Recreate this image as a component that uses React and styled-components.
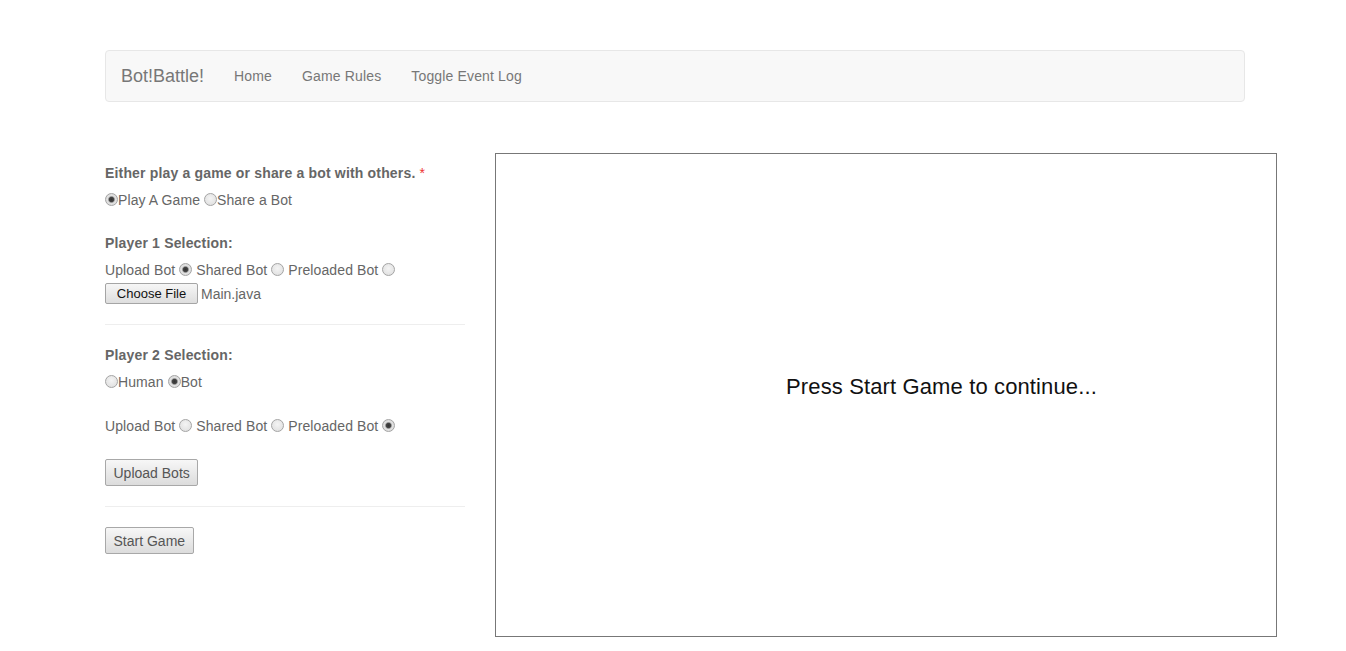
import React from "react";
import styled, { createGlobalStyle } from "styled-components";

const Global = createGlobalStyle`
  html, body { margin: 0; padding: 0; background: #fff; }
  body { font-family: "Liberation Sans", Arial, sans-serif; font-size: 14px; color: #666; }
`;

const Page = styled.div`
  width: 1140px;
  margin: 50px 0 0 105px;
`;

const Navbar = styled.nav`
  box-sizing: border-box;
  height: 52px;
  background: #f8f8f8;
  border: 1px solid #e7e7e7;
  border-radius: 4px;
  display: flex;
  align-items: center;
  padding: 0 15px;
`;

const Brand = styled.a`
  font-size: 18px;
  color: #777;
  line-height: 20px;
  padding-right: 15px;
  text-decoration: none;
`;

const NavLink = styled.a`
  font-size: 14px;
  color: #777;
  line-height: 20px;
  padding: 0 15px;
  text-decoration: none;
  letter-spacing: 0.15px;
`;

const Main = styled.div`
  display: flex;
  gap: 30px;
  margin-top: 51px;
`;

const Side = styled.div`
  width: 360px;
  flex: none;
  padding-top: 10px;
`;

const Label = styled.div`
  font-size: 14px;
  font-weight: bold;
  line-height: 20px;
  color: #666;
  letter-spacing: 0.17px;
  margin-top: ${(p) => p.$mt || 0}px;
`;

const Req = styled.span`
  color: #e33;
  font-weight: normal;
`;

const Row = styled.div`
  font-size: 14px;
  line-height: 20px;
  color: #666;
  letter-spacing: 0.1px;
  margin-top: ${(p) => p.$mt || 0}px;
  white-space: nowrap;
`;

const Radio = styled.input.attrs({ type: "radio" })`
  appearance: none;
  -webkit-appearance: none;
  box-sizing: border-box;
  width: 13px;
  height: 13px;
  margin: 0;
  vertical-align: -1px;
  border-radius: 50%;
  border: 1px solid #a4a4a4;
  background: radial-gradient(circle at 50% 40%, #f4f4f4 0%, #dcdcdc 100%);
  &:checked {
    background: radial-gradient(circle, #333 0, #444 2.2px, #9a9a9a 3px, #e2e2e2 3.8px, #d6d6d6 100%);
  }
`;

const FileRow = styled.div`
  display: flex;
  align-items: center;
  gap: 3px;
  margin-top: 3px;
  font-size: 14px;
  color: #666;
`;

const FileButton = styled.button`
  box-sizing: border-box;
  height: 21px;
  width: 93px;
  padding: 0;
  font-family: "Liberation Sans", Arial, sans-serif;
  font-size: 13px;
  color: #111;
  border: 1px solid #a5a5a5;
  border-radius: 2px;
  background: linear-gradient(#f6f6f6, #dedede);
`;

const Divider = styled.hr`
  border: 0;
  border-top: 1px solid #eee;
  margin: ${(p) => p.$mt || 20}px 0 0 0;
`;

const Button = styled.button`
  display: block;
  box-sizing: border-box;
  height: 27px;
  padding: 0 7.5px;
  margin-top: ${(p) => p.$mt || 20}px;
  font-family: "Liberation Sans", Arial, sans-serif;
  font-size: 14px;
  color: #555;
  border: 1px solid #a8a8a8;
  border-radius: 2px;
  background: linear-gradient(#f7f7f7, #dcdcdc);
`;

const Board = styled.div`
  box-sizing: border-box;
  width: 782px;
  height: 484px;
  flex: none;
  border: 1px solid #777;
  padding: 221px 0 0 290px;
`;

const BoardText = styled.div`
  font-size: 22px;
  line-height: 24px;
  color: #111;
  letter-spacing: 0.13px;
  white-space: nowrap;
`;

export default function App() {
  return (
    <>
      <Global />
      <Page>
        <Navbar>
          <Brand href="#">Bot!Battle!</Brand>
          <NavLink href="#">Home</NavLink>
          <NavLink href="#">Game Rules</NavLink>
          <NavLink href="#">Toggle Event Log</NavLink>
        </Navbar>
        <Main>
          <Side>
            <Label>
              Either play a game or share a bot with others. <Req>*</Req>
            </Label>
            <Row $mt={7}>
              <Radio name="mode" defaultChecked />Play A Game <Radio name="mode" />Share a Bot
            </Row>
            <Label $mt={23}>Player 1 Selection:</Label>
            <Row $mt={7}>
              Upload Bot <Radio name="p1" defaultChecked /> Shared Bot <Radio name="p1" /> Preloaded Bot <Radio name="p1" />
            </Row>
            <FileRow>
              <FileButton>Choose File</FileButton>
              <span>Main.java</span>
            </FileRow>
            <Divider $mt={20} />
            <Label $mt={20}>Player 2 Selection:</Label>
            <Row $mt={7}>
              <Radio name="p2type" />Human <Radio name="p2type" defaultChecked />Bot
            </Row>
            <Row $mt={24}>
              Upload Bot <Radio name="p2" /> Shared Bot <Radio name="p2" /> Preloaded Bot <Radio name="p2" defaultChecked />
            </Row>
            <Button $mt={23}>Upload Bots</Button>
            <Divider $mt={20} />
            <Button $mt={20}>Start Game</Button>
          </Side>
          <Board>
            <BoardText>Press Start Game to continue...</BoardText>
          </Board>
        </Main>
      </Page>
    </>
  );
}
